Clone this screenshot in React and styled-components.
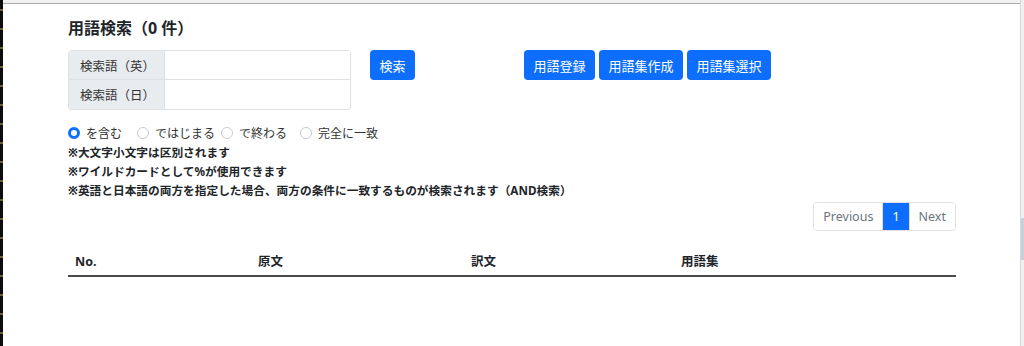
import styled, { createGlobalStyle } from "styled-components";

const GlobalStyle = createGlobalStyle`
  body {
    margin: 0;
    background: #ffffff;
    font-family: "Noto Sans", "Noto Sans CJK JP", sans-serif;
    color: #212529;
  }
`;

const Window = styled.div`
  width: 1024px;
  height: 346px;
  display: flex;
  flex-direction: column;
  overflow: hidden;
`;

const TopEdge = styled.div`
  height: 3px;
  background: #f1f1f1;
  border-bottom: 1px solid #a9a9a9;
  margin-left: 3px;
  margin-right: 4px;
`;

const Body = styled.div`
  flex: 1;
  display: flex;
  margin-top: -4px;
`;

const Terminal = styled.div`
  width: 3px;
  background: repeating-linear-gradient(
    to bottom,
    #0c0c0c 0px,
    #0c0c0c 9px,
    #6e6232 9px,
    #6e6232 11px,
    #0c0c0c 11px,
    #0c0c0c 19px
  );
`;

const Main = styled.div`
  flex: 1;
  padding: 16px 0 0 65px;
`;

const Scrollbar = styled.div`
  width: 3px;
  border-left: 1px solid #d6d6d6;
  background: #efefef;
  padding-top: 218px;
`;

const Thumb = styled.div`
  height: 42px;
  background: #c9d0da;
`;

const Content = styled.div`
  width: 888px;
`;

const Title = styled.h2`
  margin: 0 0 10px;
  font-size: 16px;
  line-height: 24px;
  font-weight: 700;
  color: #212529;
`;

const Toolbar = styled.div`
  display: flex;
  align-items: flex-start;
`;

const Fields = styled.div`
  display: flex;
  flex-direction: column;
  width: 283px;
`;

const InputGroup = styled.div`
  display: flex;
  height: 30px;
  border: 1px solid #dee2e6;
  border-top: ${(p) => (p.$first ? "1px solid #dee2e6" : "none")};
  border-radius: ${(p) => (p.$first ? "4px 4px 0 0" : "0 0 4px 4px")};
  box-sizing: border-box;
  overflow: hidden;
`;

const Label = styled.span`
  width: 96px;
  box-sizing: border-box;
  padding-left: 11px;
  display: flex;
  align-items: center;
  background: #e9ecef;
  border-right: 1px solid #dee2e6;
  font-size: 12.5px;
  color: #333;
  white-space: nowrap;
`;

const Input = styled.input`
  flex: 1;
  min-width: 0;
  border: none;
  outline: none;
  background: #fff;
  font: inherit;
`;

const Button = styled.button`
  height: 30px;
  padding: 0 9.5px;
  margin-left: ${(p) => p.$gap || "4px"};
  border: none;
  border-radius: 4px;
  background: #0d6efd;
  color: #fff;
  font-family: inherit;
  font-size: 13px;
  white-space: nowrap;
  cursor: pointer;
`;

const Options = styled.div`
  display: flex;
  align-items: center;
  height: 21px;
  margin-top: 12px;
  font-size: 12px;
  color: #333;
`;

const Option = styled.label`
  width: ${(p) => p.$w};
  display: flex;
  align-items: center;
  white-space: nowrap;
`;

const Radio = styled.span`
  width: 12px;
  height: 12px;
  flex: none;
  box-sizing: border-box;
  border-radius: 50%;
  margin-right: 6px;
  border: ${(p) => (p.$on ? "3.5px solid #0d6efd" : "1px solid #c6cbd1")};
  background: #fff;
`;

const Note = styled.div`
  font-size: 11.7px;
  line-height: 19px;
  font-weight: 700;
  color: #212529;
  white-space: nowrap;
`;

const PagerRow = styled.div`
  display: flex;
  justify-content: flex-end;
  margin-top: 2px;
`;

const Pager = styled.div`
  display: flex;
  height: 29px;
  border: 1px solid #dee2e6;
  border-radius: 4px;
  overflow: hidden;
  box-sizing: border-box;
`;

const PageItem = styled.span`
  display: flex;
  align-items: center;
  justify-content: center;
  padding: 0 9px;
  font-size: 12.5px;
  color: ${(p) => (p.$active ? "#fff" : "#6c757d")};
  background: ${(p) => (p.$active ? "#0d6efd" : "#fff")};
  border-left: ${(p) => (p.$first ? "none" : "1px solid #dee2e6")};
`;

const Table = styled.table`
  width: 888px;
  margin-top: 17px;
  border-collapse: collapse;
  table-layout: fixed;
`;

const Th = styled.th`
  width: ${(p) => p.$w || "auto"};
  padding: 4px 7px;
  line-height: 19px;
  text-align: left;
  font-size: 12.5px;
  font-weight: 700;
  color: #212529;
  border-bottom: 2px solid #4a4a4a;
`;

const modes = [
  { label: "を含む", w: "69px" },
  { label: "ではじまる", w: "84px" },
  { label: "で終わる", w: "79px" },
  { label: "完全に一致", w: "90px" },
];

export default function App() {
  return (
    <>
      <GlobalStyle />
      <Window>
        <TopEdge />
        <Body>
          <Terminal />
          <Main>
            <Content>
              <Title>用語検索（0 件）</Title>
              <Toolbar>
                <Fields>
                  <InputGroup $first>
                    <Label>検索語（英）</Label>
                    <Input />
                  </InputGroup>
                  <InputGroup>
                    <Label>検索語（日）</Label>
                    <Input />
                  </InputGroup>
                </Fields>
                <Button $gap="19px">検索</Button>
                <Button $gap="109px">用語登録</Button>
                <Button>用語集作成</Button>
                <Button>用語集選択</Button>
              </Toolbar>
              <Options>
                {modes.map((m, i) => (
                  <Option key={m.label} $w={m.w}>
                    <Radio $on={i === 0} />
                    {m.label}
                  </Option>
                ))}
              </Options>
              <Note>※大文字小文字は区別されます</Note>
              <Note>※ワイルドカードとして%が使用できます</Note>
              <Note>
                ※英語と日本語の両方を指定した場合、両方の条件に一致するものが検索されます（AND検索）
              </Note>
              <PagerRow>
                <Pager>
                  <PageItem $first>Previous</PageItem>
                  <PageItem $active>1</PageItem>
                  <PageItem>Next</PageItem>
                </Pager>
              </PagerRow>
              <Table>
                <thead>
                  <tr>
                    <Th $w="169px">No.</Th>
                    <Th $w="199px">原文</Th>
                    <Th $w="196px">訳文</Th>
                    <Th>用語集</Th>
                  </tr>
                </thead>
              </Table>
            </Content>
          </Main>
          <Scrollbar>
            <Thumb />
          </Scrollbar>
        </Body>
      </Window>
    </>
  );
}
